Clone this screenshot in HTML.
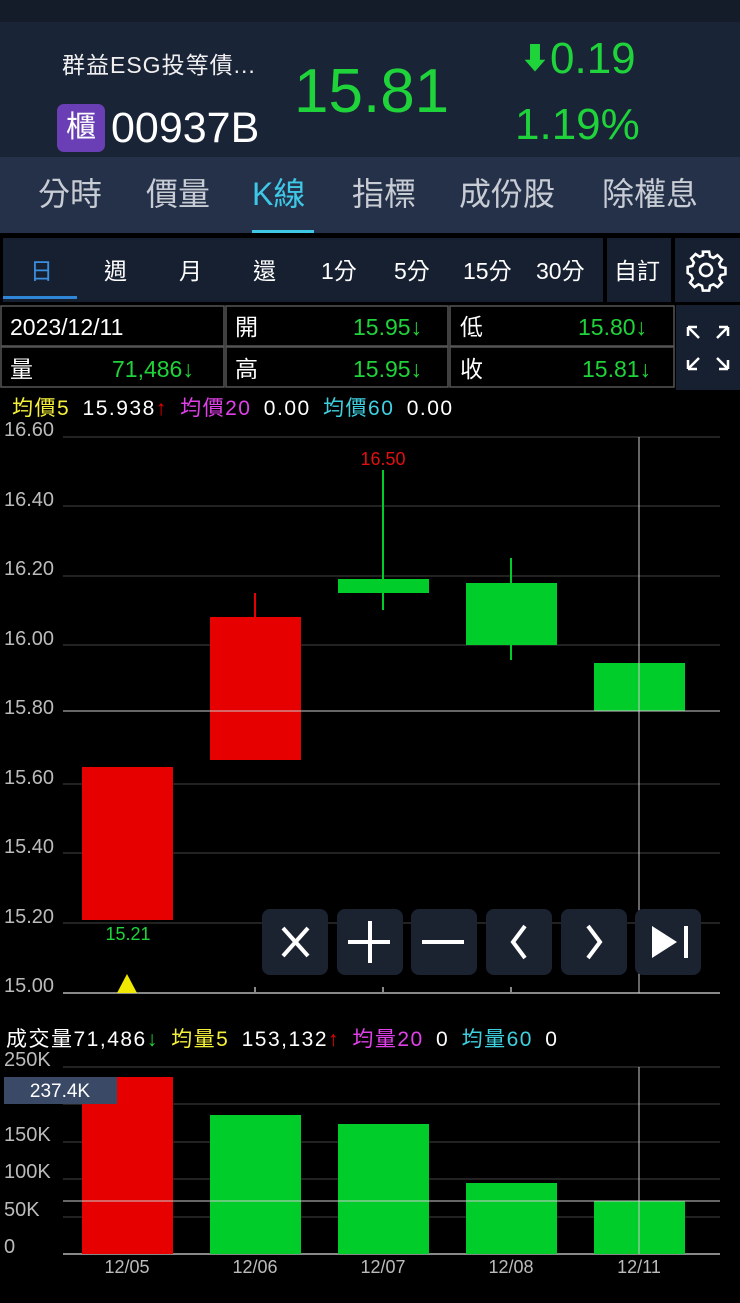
<!DOCTYPE html>
<html><head><meta charset="utf-8"><style>
*{margin:0;padding:0;box-sizing:border-box}
body{width:740px;height:1303px;background:#000;position:relative;overflow:hidden;font-family:"Liberation Sans","Noto Sans CJK TC",sans-serif;color:#fff}
.a{position:absolute;white-space:nowrap}
.g{color:#1fd33a}
.ln{font-size:21px;line-height:26px;letter-spacing:1.5px;word-spacing:5px}
</style></head><body>
<div class="a" style="left:0;top:0;width:740px;height:22px;background:#141b29"></div>
<div class="a" style="left:0;top:22px;width:740px;height:135px;background:#1a2437"></div>
<div class="a" style="left:62px;top:46px;font-size:23px;letter-spacing:1px;color:#f0f0f0">群益ESG投等債...</div>
<div class="a" style="left:57px;top:104px;width:48px;height:48px;background:#6a3fb5;border-radius:7px;font-size:30px;line-height:48px;text-align:center">櫃</div>
<div class="a" style="left:111px;top:104px;font-size:43px;line-height:48px">00937B</div>
<div class="a g" style="left:294px;top:56px;font-size:62px;line-height:72px">15.81</div>
<div class="a g" style="left:520px;top:32px;font-size:44px;line-height:54px"><span style="font-size:30px;vertical-align:4px">⬇</span>0.19</div>
<div class="a g" style="left:515px;top:98px;font-size:44px;line-height:54px">1.19%</div>
<div class="a" style="left:0;top:157px;width:740px;height:76px;background:#243149"></div>
<div class="a" style="top:172px;font-size:32px;line-height:44px;color:#c8ccd4;left:38px">分時</div>
<div class="a" style="top:172px;font-size:32px;line-height:44px;color:#c8ccd4;left:146px">價量</div>
<div class="a" style="top:172px;font-size:32px;line-height:44px;color:#3fc8e6;left:252px">K線</div>
<div class="a" style="top:172px;font-size:32px;line-height:44px;color:#c8ccd4;left:352px">指標</div>
<div class="a" style="top:172px;font-size:32px;line-height:44px;color:#c8ccd4;left:459px">成份股</div>
<div class="a" style="top:172px;font-size:32px;line-height:44px;color:#c8ccd4;left:602px">除權息</div>
<div class="a" style="left:252px;top:230px;width:62px;height:3px;background:#3fc8e6"></div>
<div class="a" style="left:3px;top:238px;width:600px;height:64px;background:#172030"></div>
<div class="a" style="left:607px;top:238px;width:64px;height:64px;background:#172030"></div>
<div class="a" style="left:675px;top:238px;width:65px;height:64px;background:#172030"></div>
<div class="a" style="left:3px;top:296px;width:74px;height:3px;background:#2f86d6"></div>
<div class="a" style="top:256px;font-size:23px;line-height:30px;left:30px;color:#3a8fe0">日</div>
<div class="a" style="top:256px;font-size:23px;line-height:30px;left:104px">週</div>
<div class="a" style="top:256px;font-size:23px;line-height:30px;left:179px">月</div>
<div class="a" style="top:256px;font-size:23px;line-height:30px;left:253px">還</div>
<div class="a" style="top:256px;font-size:23px;line-height:30px;left:321px">1分</div>
<div class="a" style="top:256px;font-size:23px;line-height:30px;left:394px">5分</div>
<div class="a" style="top:256px;font-size:23px;line-height:30px;left:463px">15分</div>
<div class="a" style="top:256px;font-size:23px;line-height:30px;left:536px">30分</div>
<div class="a" style="top:256px;font-size:23px;line-height:30px;left:614px">自訂</div>
<svg class="a" style="left:684px;top:248px" width="44" height="44" viewBox="0 0 24 24" fill="none" stroke="#fff" stroke-width="1.4"><circle cx="12" cy="12" r="3.3"/><path d="M10.3 2h3.4l.5 2.6 1.9.8 2.2-1.5 2.4 2.4-1.5 2.2.8 1.9 2.6.5v3.4l-2.6.5-.8 1.9 1.5 2.2-2.4 2.4-2.2-1.5-1.9.8-.5 2.6h-3.4l-.5-2.6-1.9-.8-2.2 1.5-2.4-2.4 1.5-2.2-.8-1.9L2 13.7v-3.4l2.6-.5.8-1.9-1.5-2.2 2.4-2.4 2.2 1.5 1.9-.8z"/></svg>
<svg class="a" style="left:0;top:305px" width="740" height="85">
<g fill="#000" stroke="#555" stroke-width="1.5"><rect x="1" y="1" width="223" height="40"/><rect x="226" y="1" width="222" height="40"/><rect x="450" y="1" width="224" height="40"/><rect x="1" y="42" width="223" height="40"/><rect x="226" y="42" width="222" height="40"/><rect x="450" y="42" width="224" height="40"/></g>
<rect x="676" y="0" width="64" height="85" fill="#172030"/>
<g stroke="#fff" stroke-width="2.5" fill="none"><path d="M688 22l11 11M688 22h9M688 22v9M728 22l-11 11M728 22h-9M728 22v9M688 64l11-11M688 64h9M688 64v-9M728 64l-11-11M728 64h-9M728 64v-9"/></g>
</svg>
<div class="a" style="left:10px;top:312px;font-size:23px;line-height:30px">2023/12/11</div>
<div class="a" style="left:235px;top:312px;font-size:23px;line-height:30px">開</div>
<div class="a g" style="left:353px;top:312px;font-size:23px;line-height:30px">15.95↓</div>
<div class="a" style="left:460px;top:312px;font-size:23px;line-height:30px">低</div>
<div class="a g" style="left:578px;top:312px;font-size:23px;line-height:30px">15.80↓</div>
<div class="a" style="left:10px;top:354px;font-size:23px;line-height:30px">量</div>
<div class="a g" style="left:112px;top:354px;font-size:23px;line-height:30px">71,486↓</div>
<div class="a" style="left:235px;top:354px;font-size:23px;line-height:30px">高</div>
<div class="a g" style="left:353px;top:354px;font-size:23px;line-height:30px">15.95↓</div>
<div class="a" style="left:460px;top:354px;font-size:23px;line-height:30px">收</div>
<div class="a g" style="left:582px;top:354px;font-size:23px;line-height:30px">15.81↓</div>
<div class="a ln" style="left:12px;top:396px"><span style="color:#f5f03a">均價5</span> 15.938<span style="color:#e00">↑</span> <span style="color:#e040e8">均價20</span> 0.00 <span style="color:#3fd0e0">均價60</span> 0.00</div>
<svg class="a" style="left:0;top:0" width="740" height="1303" font-family="Liberation Sans" font-size="20">
<g stroke="#444" stroke-width="1"><line x1="63" x2="720" y1="437" y2="437"/><line x1="63" x2="720" y1="506" y2="506"/><line x1="63" x2="720" y1="576" y2="576"/><line x1="63" x2="720" y1="645" y2="645"/><line x1="63" x2="720" y1="784" y2="784"/><line x1="63" x2="720" y1="853" y2="853"/><line x1="63" x2="720" y1="923" y2="923"/>
<line x1="63" x2="720" y1="1067" y2="1067"/><line x1="63" x2="720" y1="1104" y2="1104"/><line x1="63" x2="720" y1="1142" y2="1142"/><line x1="63" x2="720" y1="1179" y2="1179"/><line x1="63" x2="720" y1="1217" y2="1217"/></g>
<g stroke="#888" stroke-width="2"><line x1="63" x2="720" y1="993" y2="993"/><line x1="63" x2="720" y1="1254" y2="1254"/><line x1="255" x2="255" y1="987" y2="993"/><line x1="383" x2="383" y1="987" y2="993"/><line x1="511" x2="511" y1="987" y2="993"/></g>
<g fill="#bbb"><text x="4" y="436">16.60</text><text x="4" y="506">16.40</text><text x="4" y="575">16.20</text><text x="4" y="645">16.00</text><text x="4" y="714">15.80</text><text x="4" y="784">15.60</text><text x="4" y="853">15.40</text><text x="4" y="923">15.20</text><text x="4" y="992">15.00</text>
<text x="4" y="1066">250K</text><text x="4" y="1141">150K</text><text x="4" y="1178">100K</text><text x="4" y="1216">50K</text><text x="4" y="1253">0</text>
<g text-anchor="middle" font-size="18"><text x="127" y="1273">12/05</text><text x="255" y="1273">12/06</text><text x="383" y="1273">12/07</text><text x="511" y="1273">12/08</text><text x="639" y="1273">12/11</text></g></g>
<g stroke-width="2"><line x1="255" x2="255" y1="593" y2="618" stroke="#e60000"/><line x1="383" x2="383" y1="470" y2="610" stroke="#00cc2a"/><line x1="511" x2="511" y1="558" y2="660" stroke="#00cc2a"/></g>
<rect x="82" y="767" width="91" height="153" fill="#e60000"/><rect x="210" y="617" width="91" height="143" fill="#e60000"/>
<rect x="338" y="579" width="91" height="14" fill="#00cc2a"/><rect x="466" y="583" width="91" height="62" fill="#00cc2a"/><rect x="594" y="663" width="91" height="48" fill="#00cc2a"/>
<rect x="82" y="1077" width="91" height="177" fill="#e60000"/><rect x="210" y="1115" width="91" height="139" fill="#00cc2a"/><rect x="338" y="1124" width="91" height="130" fill="#00cc2a"/><rect x="466" y="1183" width="91" height="71" fill="#00cc2a"/><rect x="594" y="1201" width="91" height="53" fill="#00cc2a"/>
<g stroke="#ccc" stroke-width="1"><line x1="639" x2="639" y1="437" y2="993"/><line x1="639" x2="639" y1="1067" y2="1254"/><line x1="63" x2="720" y1="711" y2="711"/><line x1="63" x2="720" y1="1201" y2="1201"/></g>
<text x="383" y="465" fill="#e01010" text-anchor="middle" font-size="18">16.50</text>
<text x="128" y="940" fill="#1fd33a" text-anchor="middle" font-size="18">15.21</text>
<polygon points="127,974 117,993 137,993" fill="#f0e800"/>
<rect x="4" y="1077" width="113" height="27" fill="#3a4a66"/>
<text x="60" y="1097" fill="#fff" text-anchor="middle" font-size="19">237.4K</text>
<g fill="#1b2330"><rect x="262" y="909" width="66" height="66" rx="8"/><rect x="337" y="909" width="66" height="66" rx="8"/><rect x="411" y="909" width="66" height="66" rx="8"/><rect x="486" y="909" width="66" height="66" rx="8"/><rect x="561" y="909" width="66" height="66" rx="8"/><rect x="635" y="909" width="66" height="66" rx="8"/></g>
<g stroke="#fff" stroke-width="4" fill="none"><path d="M283 928l25 28M308 928l-25 28"/><path d="M370 921v42M348 942h42"/><path d="M422 942h42"/><path d="M525 926l-12 16 12 16"/><path d="M588 926l12 16-12 16"/><path d="M686 926v32"/></g>
<polygon points="652,926 652,958 677,942" fill="#fff"/>
</svg>
<div class="a ln" style="left:6px;top:1027px">成交量71,486<span class="g">↓</span> <span style="color:#f5f03a">均量5</span> 153,132<span style="color:#e00">↑</span> <span style="color:#e040e8">均量20</span> 0 <span style="color:#3fd0e0">均量60</span> 0</div>
</body></html>
